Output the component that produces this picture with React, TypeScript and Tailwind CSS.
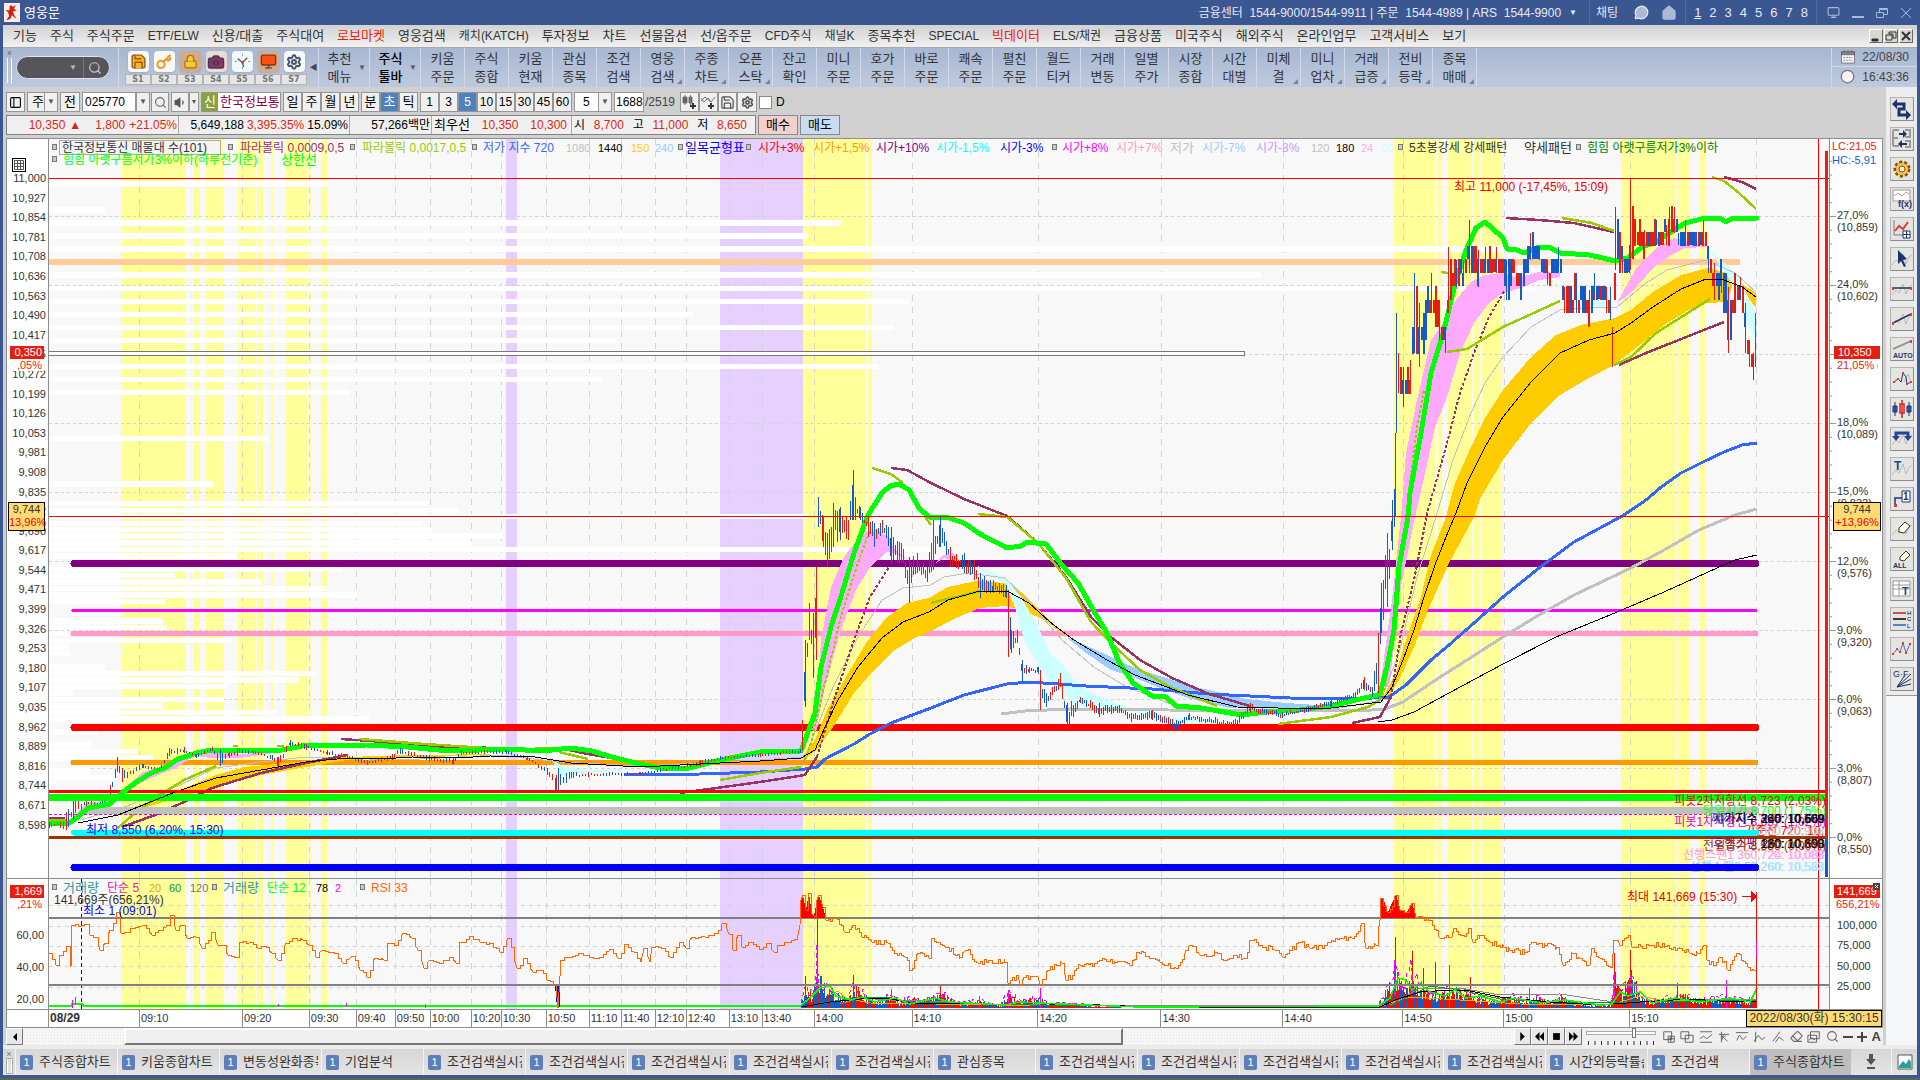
import React from 'react';
import {
  Camera, Clock, Download, Eraser, Home, Image, Key, Lock, MessageCircle, Monitor, PanelLeft, Save, Search, Settings, Volume1,
} from 'lucide-react';

const FONT = "font-['Liberation_Sans','Noto_Sans_CJK_KR',sans-serif]";

const menus = [
  '기능', '주식', '주식주문', 'ETF/ELW', '신용/대출', '주식대여', '로보마켓', '영웅검색', '캐치(KATCH)', '투자정보', '차트',
  '선물옵션', '선/옵주문', 'CFD주식', '채널K', '종목추천', 'SPECIAL', '빅데이터', 'ELS/채권', '금융상품', '미국주식',
  '해외주식', '온라인업무', '고객서비스', '보기',
];
const hotMenus = ['로보마켓', '빅데이터'];

const shortcuts = [
  ['키움', '주문'], ['주식', '종합'], ['키움', '현재'], ['관심', '종목'], ['조건', '검색'], ['영웅', '검색', '1'],
  ['주종', '차트', '1'], ['오픈', '스탁', '1'], ['잔고', '확인'], ['미니', '주문'], ['호가', '주문'], ['바로', '주문'],
  ['쾌속', '주문'], ['펼친', '주문'], ['월드', '티커'], ['거래', '변동'], ['일별', '주가'], ['시장', '종합'],
  ['시간', '대별'], ['미체', '결', '1'], ['미니', '업차', '1'], ['거래', '급증', '1'], ['전비', '등락', '1'], ['종목', '매매', '1'],
];

const tabs = [
  '주식종합차트', '키움종합차트', '변동성완화종목', '기업분석', '조건검색실시간', '조건검색실시간', '조건검색실시간',
  '조건검색실시간', '조건검색실시간', '관심종목', '조건검색실시간', '조건검색실시간', '조건검색실시간', '조건검색실시간',
  '조건검색실시간', '시간외등락률순', '조건검색', '주식종합차트',
];

const priceLabels = [
  '11,000', '10,927', '10,854', '10,781', '10,708', '10,636', '10,563', '10,490', '10,417', '10,345', '10,272', '10,199',
  '10,126', '10,053', '9,981', '9,908', '9,835', '9,762', '9,690', '9,617', '9,544', '9,471', '9,399', '9,326', '9,253',
  '9,180', '9,107', '9,035', '8,962', '8,889', '8,816', '8,744', '8,671', '8,598',
];

const rateLabels = [
  ['27,0%', '(10,859)'], ['24,0%', '(10,602)'], ['21,0%', '(10,346)'], ['18,0%', '(10,089)'], ['15,0%', '(9,832)'],
  ['12,0%', '(9,576)'], ['9,0%', '(9,320)'], ['6,0%', '(9,063)'], ['3,0%', '(8,807)'], ['0,0%', '(8,550)'],
];

const times: [string, number][] = [
  ['08/29', 49], ['09:10', 139], ['09:20', 242], ['09:30', 309], ['09:40', 356], ['09:50', 395], ['10:00', 430],
  ['10:20', 471], ['10:30', 501], ['10:50', 546], ['11:10', 589], ['11:40', 621], ['12:10', 655], ['12:40', 686],
  ['13:10', 729], ['13:40', 762], ['14:00', 814], ['14:10', 912], ['14:20', 1038], ['14:30', 1161], ['14:40', 1283],
  ['14:50', 1403], ['15:00', 1504], ['15:10', 1630], ['', 1883],
];

// x start, x end, colour of the strong / weak zones
const yellow = [
  [121, 186], [191, 192], [193, 197], [198, 200], [206, 217], [218, 219], [220, 224], [238, 256], [257, 259], [260, 263],
  [269, 270], [271, 273], [286, 307], [309, 311], [321, 327], [803, 866], [868, 872], [1394, 1435], [1438, 1442],
  [1448, 1472], [1474, 1480], [1482, 1499], [1500, 1501], [1503, 1504], [1621, 1676], [1677, 1679], [1680, 1689],
  [1691, 1692], [1700, 1705],
];
const violet = [[506, 517], [720, 803]];

// volume at price: y, height, x end
const profile = [
  [181, 6, 329], [207, 6, 105], [220, 6, 841], [233, 6, 808], [246, 6, 1586], [272, 6, 1261], [286, 5, 1535], [299, 5, 909],
  [312, 5, 693], [325, 5, 894], [338, 5, 616], [364, 5, 879], [377, 5, 603], [390, 5, 350], [436, 5, 269], [481, 6, 213],
  [501, 5, 429], [508, 5, 458], [514, 5, 808], [521, 5, 422], [527, 5, 432], [533, 6, 503], [540, 6, 471], [547, 5, 930],
  [553, 6, 235], [567, 5, 342], [573, 5, 175], [579, 6, 262], [586, 5, 327], [592, 6, 357], [599, 5, 165], [618, 6, 163],
  [625, 5, 167], [631, 5, 98], [638, 5, 231], [644, 6, 69], [651, 5, 71], [664, 6, 105], [671, 5, 316], [677, 6, 299],
  [684, 5, 228], [690, 6, 73], [697, 5, 224], [703, 6, 163], [710, 5, 277], [716, 6, 369], [729, 6, 97], [742, 6, 91],
  [749, 5, 138], [755, 6, 153], [768, 6, 90], [775, 5, 115], [781, 5, 57],
];

const green = '49,823 69,823 78,817 88,808 110,804 122,793 135,783 151,773 167,767 176,760 196,753 212,750 233,751 282,750 302,746 367,745 408,747 449,751 478,750 506,749 543,751 571,748 592,751 612,757 640,764 660,768 685,769 720,760 760,752 801,751 815,713 821,667 831,627 842,593 854,553 868,515 882,493 890,486 899,484 909,490 919,508 929,517 946,517 964,523 980,534 1007,548 1021,546 1027,542 1046,544 1062,565 1078,583 1095,613 1107,633 1119,662 1133,683 1152,696 1166,697 1176,706 1201,708 1242,715 1266,712 1299,710 1331,706 1360,699 1378,695 1381,690 1387,667 1394,630 1399,567 1408,517 1410,493 1421,433 1431,373 1444,330 1456,280 1467,248 1476,228 1485,222 1492,228 1503,238 1507,249 1517,250 1524,253 1539,247 1549,247 1560,253 1589,255 1603,258 1614,261 1628,258 1642,247 1656,242 1674,230 1685,223 1705,218 1722,219 1726,222 1731,219 1757,218';
const black = '78,823 98,819 118,815 143,805 175,792 216,778 261,770 306,762 347,758 380,759 412,757 457,758 490,756 535,757 571,763 640,767 700,764 760,761 801,758 815,750 825,727 838,700 858,667 882,638 903,622 929,612 948,600 980,591 1007,591 1029,603 1050,622 1074,640 1107,660 1135,675 1188,695 1237,707 1278,708 1331,708 1372,703 1381,702 1392,687 1403,660 1414,630 1424,597 1435,565 1446,537 1456,513 1467,483 1485,447 1503,417 1531,382 1560,353 1589,340 1615,333 1631,323 1653,307 1681,289 1706,279 1724,280 1742,287 1756,297';
const blue = '624,775 700,774 760,772 805,769 817,767 825,759 854,744 870,734 891,723 931,708 964,695 1007,684 1029,682 1086,686 1152,689 1209,694 1290,698 1352,699 1372,698 1389,697 1406,685 1431,660 1449,645 1474,623 1503,597 1539,568 1574,542 1624,515 1646,500 1660,488 1681,473 1703,462 1724,452 1742,445 1757,443';
const silver = '1001,714 1025,711 1070,709 1168,710 1290,711 1372,710 1385,709 1403,702 1431,683 1467,660 1503,637 1539,615 1574,595 1631,568 1664,550 1699,530 1735,515 1757,509';
const longBlack = '1378,722 1392,720 1414,712 1449,693 1503,664 1556,637 1610,615 1664,592 1717,568 1735,560 1757,555';
const thinGray = '80,820 122,808 180,785 216,768 261,762 306,757 400,760 500,755 560,762 640,766 760,760 805,757 833,687 858,637 882,600 903,588 931,585 944,577 968,573 1005,578 1025,597 1062,640 1095,668 1127,687 1168,703 1240,711 1340,708 1381,700 1399,653 1417,577 1435,520 1453,460 1471,413 1485,383 1503,357 1531,327 1560,310 1589,308 1617,307 1646,283 1667,270 1706,260 1735,273 1756,292';
const maroon = [
  '49,818 65,818', '122,827 155,815 184,802 212,788 261,773 306,763 347,755', '341,739 371,741 445,747 486,747',
  '559,748 588,754 612,758', '680,793 760,782 805,775 817,757',
  '891,468 907,470 931,483 964,499 1007,516 1038,543 1066,577 1091,617 1111,637 1140,660 1172,678 1209,694 1250,706',
  '1352,723 1380,717 1391,697', '1506,218 1539,220 1574,223 1596,228 1614,232', '1619,365 1646,353 1724,322',
  '1724,177 1742,182 1756,189',
];
const maroonDots = ['817,757 833,703 854,640 870,597 889,567', '1391,697 1401,633 1414,580 1428,510 1446,447 1460,393 1474,353 1489,317 1505,290'];
const olive = [
  '49,820 66,820', '118,828 135,813 163,793 184,780 216,766', '359,739 424,744 486,748', '535,748 557,748', '559,752 588,759',
  '720,780 760,773 801,767', '872,468 891,474 903,483', '925,517 931,525', '931,603 964,595 980,591',
  '978,514 1007,517 1038,543 1066,578 1091,622 1111,643 1140,670 1172,688 1217,706', '1278,724 1331,717 1368,707 1380,700',
  '1447,352 1467,349 1503,327 1560,301', '1562,218 1592,223 1614,231', '1614,365 1631,357 1656,333 1710,299',
  '1712,177 1724,181 1739,193 1756,209', '1441,272 1448,273', '277,746 284,746', '233,746 238,746',
];
const oliveDots = ['805,760 811,743 825,683 842,613 858,563 870,530', '1380,700 1385,687 1396,610 1408,500 1417,427 1424,390'];

const clouds: [string, string][] = [
  ['#ffcc00', '122,812 180,790 216,775 245,767 286,763 347,757 412,755 500,754 412,758 347,760 306,767 261,775 212,788 171,800 122,814'],
  ['#ffcc00', '803,756 815,740 827,710 846,677 866,643 886,618 907,603 929,598 948,587 976,581 1007,583 1021,592 1046,617 1066,637 1046,621 1025,611 1005,606 980,608 956,618 929,632 915,638 895,650 874,670 854,693 833,727 817,750 803,760'],
  ['#99ccff', '1066,637 1074,640 1107,655 1135,668 1188,685 1246,699 1286,703 1331,706 1286,708 1229,708 1188,698 1160,688 1135,678 1111,670 1086,653'],
  ['#ffcc00', '1381,700 1396,673 1406,640 1421,597 1431,555 1446,517 1455,483 1471,447 1485,418 1503,390 1531,357 1556,335 1581,325 1615,318 1631,310 1653,292 1681,275 1708,268 1724,272 1739,282 1756,293 1756,308 1742,290 1733,284 1727,302 1706,303 1689,310 1667,323 1646,340 1614,365 1589,378 1560,395 1531,423 1503,460 1481,497 1474,517 1449,563 1428,610 1414,647 1399,680 1387,700'],
  ['#ffaaff', '72,818 86,803 110,800 122,790 143,772 165,765 184,755 196,755 176,768 151,778 127,790 110,808 90,810'],
  ['#ffaaff', '196,756 214,751 240,754 280,752 240,758 212,758'],
  ['#ffaaff', '812,730 817,707 821,640 831,587 844,557 862,533 878,530 889,537 895,550 909,560 895,553 887,552 870,567 856,590 842,627 825,687 816,730'],
  ['#ffaaff', '933,565 944,555 952,553 962,562 944,558'],
  ['#ffaaff', '1380,687 1392,600 1401,517 1406,453 1417,400 1431,340 1444,322 1456,300 1471,282 1485,275 1503,273 1517,278 1539,272 1560,273 1560,277 1539,280 1524,287 1503,293 1489,303 1474,323 1460,353 1447,397 1435,427 1428,460 1415,517 1401,587 1389,687'],
  ['#ffaaff', '1617,303 1635,270 1656,248 1674,238 1692,242 1706,243 1706,247 1685,248 1671,255 1653,268 1631,293'],
  ['#ccffff', '550,758 562,766 585,770 640,769 585,773 562,776'],
  ['#ccffff', '976,565 1005,578 1021,597 1038,627 1050,653 1064,667 1078,685 1103,698 1127,707 1148,712 1172,718 1240,722 1172,722 1127,710 1099,707 1074,705 1064,692 1054,688 1042,670 1025,643 1015,607 1005,583 984,573'],
  ['#ccffff', '1560,278 1575,295 1606,302 1612,312 1606,309 1575,300'],
  ['#ccffff', '1708,248 1724,263 1739,277 1746,293 1755,313 1755,340 1747,320 1740,303 1728,277'],
];

const levels: [number, number, string, number, number][] = [
  [563, 7, '#800080', 74, 1756], [610, 3, '#ff00ff', 73, 1756], [633, 5, '#ff99cc', 73, 1756], [727, 7, '#ff0000', 74, 1756],
  [762, 5, '#ff9900', 73, 1756], [791, 3, '#ff0000', 49, 1826], [797, 7, '#00ff00', 49, 1826], [810, 7, '#c0c0c0', 88, 1756],
  [832, 6, '#00ffff', 74, 1756], [837, 3, '#993300', 49, 1826], [867, 7, '#0000ff', 74, 1756],
];

// x, high, low
const bars = [
  [49, 822, 828], [66, 812, 830], [73, 800, 820], [86, 798, 806], [102, 800, 810], [110, 785, 798], [117, 757, 772],
  [122, 768, 782], [143, 764, 768], [159, 768, 771], [169, 748, 756], [184, 747, 753], [196, 754, 758], [212, 747, 751],
  [220, 750, 766], [229, 752, 758], [237, 748, 756], [253, 750, 754], [272, 755, 760], [278, 757, 768], [290, 740, 746],
  [306, 744, 750], [327, 750, 755], [347, 754, 758], [367, 760, 765], [392, 754, 760], [400, 748, 754], [429, 755, 762],
  [453, 758, 764], [461, 750, 755], [506, 750, 754], [527, 756, 760], [547, 768, 775], [556, 775, 793], [558, 768, 790],
  [571, 772, 778], [640, 772, 775], [700, 760, 766], [720, 756, 760], [760, 753, 757], [800, 749, 753], [802, 720, 750],
  [805, 640, 707], [809, 603, 640], [813, 613, 678], [816, 567, 660], [818, 497, 527], [823, 517, 547], [827, 533, 567],
  [833, 503, 547], [840, 507, 540], [848, 520, 540], [853, 470, 520], [855, 497, 520], [860, 507, 520], [868, 517, 537],
  [874, 523, 547], [882, 520, 533], [891, 527, 563], [901, 543, 563], [909, 557, 603], [917, 553, 573], [927, 567, 582],
  [933, 520, 570], [940, 517, 547], [950, 547, 567], [964, 553, 573], [974, 560, 580], [980, 573, 598], [993, 580, 593],
  [1006, 585, 598], [1008, 590, 657], [1011, 630, 653], [1017, 630, 643], [1022, 660, 682], [1029, 667, 673], [1038, 667, 674],
  [1040, 670, 710], [1046, 693, 707], [1060, 673, 687], [1067, 703, 730], [1080, 697, 703], [1099, 703, 717], [1119, 705, 713],
  [1131, 713, 722], [1152, 710, 720], [1176, 720, 730], [1189, 713, 720], [1233, 720, 730], [1250, 703, 713], [1282, 712, 718],
  [1331, 700, 707], [1355, 692, 697], [1364, 677, 690], [1372, 687, 697], [1378, 633, 693], [1381, 583, 633], [1387, 533, 607],
  [1392, 500, 550], [1395, 433, 517], [1396, 313, 433], [1398, 353, 393], [1403, 367, 407], [1410, 360, 393], [1414, 273, 353],
  [1419, 303, 367], [1431, 273, 313], [1439, 300, 340], [1445, 327, 353], [1448, 247, 313], [1456, 260, 287], [1463, 260, 275],
  [1469, 220, 273], [1478, 250, 287], [1485, 247, 273], [1496, 247, 273], [1506, 260, 300], [1514, 260, 273], [1521, 273, 297],
  [1530, 233, 260], [1539, 247, 260], [1547, 260, 285], [1558, 247, 273], [1564, 287, 313], [1576, 273, 313], [1589, 290, 327],
  [1594, 273, 293], [1606, 287, 313], [1610, 287, 320], [1612, 327, 367], [1615, 207, 270], [1622, 247, 273], [1629, 245, 273],
  [1630, 178, 270], [1635, 220, 243], [1644, 230, 257], [1656, 220, 245], [1666, 225, 245], [1669, 207, 243], [1674, 207, 233],
  [1678, 233, 245], [1685, 220, 243], [1696, 233, 245], [1703, 220, 243], [1708, 247, 273], [1714, 263, 300], [1721, 260, 293],
  [1728, 287, 353], [1735, 273, 313], [1740, 277, 300], [1745, 303, 353], [1749, 340, 367], [1753, 353, 380], [1755, 313, 367],
];

const rsiKeys = '49,953 56,965 60,955 67,946 71,967 72,925 86,924 90,935 95,937 100,950 105,943 110,930 117,912 121,933 132,928 143,925 152,935 160,930 167,925 171,915 176,930 182,925 187,938 196,937 202,948 212,932 218,945 223,945 228,955 236,957 240,942 250,942 258,948 263,946 272,953 278,960 286,943 294,938 303,940 309,945 316,957 322,950 335,953 343,963 352,956 360,970 367,977 375,958 384,960 388,943 395,945 403,933 412,938 418,950 424,968 430,960 440,963 450,957 456,963 460,942 470,936 480,942 490,943 500,952 508,938 517,968 524,958 533,972 540,970 547,980 556,986 558,1008 561,960 566,957 580,953 590,957 600,957 610,949 618,958 625,944 634,952 641,962 644,948 650,962 652,947 662,948 670,957 680,942 686,948 692,937 705,937 715,933 723,923 729,934 733,950 738,935 742,947 750,942 760,949 768,943 774,952 778,945 785,942 797,940 800,925 801,900 803,895 806,910 809,893 812,914 814,916 817,900 819,895 823,907 826,920 835,917 845,932 853,925 862,937 872,942 888,943 895,953 905,957 910,970 918,953 929,958 932,938 945,947 960,957 966,950 978,963 990,960 1005,962 1008,983 1018,975 1020,985 1024,977 1038,977 1040,985 1048,970 1062,963 1066,980 1080,965 1095,963 1100,960 1115,962 1130,965 1137,952 1160,962 1176,968 1186,950 1190,945 1200,955 1215,952 1225,960 1235,955 1245,958 1250,940 1260,945 1275,950 1283,957 1290,950 1300,942 1310,948 1325,945 1340,938 1352,938 1362,923 1366,948 1376,945 1380,920 1381,898 1384,906 1388,912 1396,895 1400,910 1407,912 1412,903 1416,918 1430,920 1440,938 1452,937 1454,928 1462,935 1469,928 1473,942 1480,935 1490,942 1504,947 1510,950 1525,952 1532,942 1545,945 1557,947 1563,965 1572,953 1580,958 1590,965 1592,948 1600,958 1612,968 1614,940 1620,945 1630,935 1632,947 1650,945 1665,946 1680,948 1690,953 1698,953 1704,945 1707,960 1714,965 1720,957 1728,970 1737,953 1748,967 1754,970 1757,958';

// x, bar height
const volumes = [
  [801, 4], [806, 24], [812, 14], [817, 44], [822, 28], [832, 18], [848, 10], [854, 26], [862, 16], [875, 6], [890, 14],
  [900, 6], [908, 10], [930, 10], [940, 16], [960, 5], [980, 8], [1000, 2], [1008, 15], [1020, 8], [1040, 10], [1052, 4],
  [1066, 6], [1090, 2], [1120, 1], [1378, 2], [1385, 18], [1395, 46], [1403, 22], [1412, 44], [1420, 22], [1430, 18],
  [1440, 12], [1449, 22], [1470, 14], [1490, 8], [1510, 12], [1530, 8], [1535, 12], [1550, 6], [1562, 12], [1575, 4],
  [1610, 3], [1615, 34], [1622, 16], [1631, 38], [1640, 14], [1650, 6], [1665, 10], [1680, 14], [1700, 8], [1726, 12],
  [1745, 7], [1757, 12],
];
const spikes = [
  [805, 976, '#ff0000'], [817, 919, '#e61400'], [853, 975, '#e61400'], [891, 989, '#ff00ff'], [940, 986, '#e61400'],
  [979, 996, '#ff00ff'], [1008, 990, '#ff00ff'], [1040, 988, '#ff00ff'], [1395, 937, '#e61400'], [1412, 951, '#e61400'],
  [1423, 968, '#e61400'], [1435, 962, '#e61400'], [1449, 965, '#ff00ff'], [1470, 977, '#e61400'], [1529, 988, '#ff00ff'],
  [1614, 953, '#e61400'], [1630, 950, '#e61400'], [1677, 983, '#e61400'], [1726, 980, '#ff00ff'],
] as [number, number, string][];

function makeRandom(seed: number) {
  let s = seed;
  return () => {
    s = (s * 1103515245 + 12345) % 2147483648;
    return s / 2147483648;
  };
}

function lerpKeys(keys: number[][], x: number, col: number) {
  for (let i = 1; i < keys.length; i++) {
    if (x <= keys[i][0]) {
      const a = keys[i - 1];
      const b = keys[i];
      return a[col] + ((b[col] - a[col]) * (x - a[0])) / (b[0] - a[0] || 1);
    }
  }
  return keys[keys.length - 1][col];
}

// above 10,000 the price moves in 50 won ticks
const snap = (y: number) => Math.round(219 + Math.round((y - 219) / 13.45) * 13.45);

function buildCandles() {
  const rnd = makeRandom(7);
  let up = '';
  let down = '';
  let rising = true;
  bars.forEach(([x, hi, lo], i) => {
    if (i % 2) up += `M${x + 0.5} ${hi}V${lo}`;
    else down += `M${x + 0.5} ${hi}V${lo}`;
    const next = bars[i + 1];
    if (!next) return;
    const quiet = x < 800;
    for (let px = x + 2; px < next[0]; px += quiet ? 3 : 2) {
      const h = lerpKeys(bars, px, 1);
      const l = lerpKeys(bars, px, 2);
      const size = l - h;
      let top = Math.round(h + rnd() * size * 0.5);
      let bottom = Math.max(top + 2, Math.round(l - rnd() * size * 0.4));
      let d = `M${px + 0.5} ${top}V${bottom}`;
      if (px > 1396) {
        top = snap(top);
        bottom = Math.max(top + 13, snap(bottom));
        d = `M${px + 0.5} ${top}V${bottom}M${px + 1.5} ${top}V${bottom}`;
      }
      if (rnd() > 0.6) rising = !rising;
      if (rising) up += d;
      else down += d;
    }
  });
  return { up, down };
}

function buildRsi() {
  const rnd = makeRandom(21);
  const keys = rsiKeys.split(' ').map((p) => p.split(',').map(Number));
  let d = `M${keys[0][0]} ${keys[0][1]}`;
  keys.forEach(([x, y], i) => {
    const next = keys[i + 1];
    if (!next) return;
    d += `L${x} ${y}`;
    const step = x < 800 ? 3 : 2;
    for (let px = x + step; px < next[0]; px += step) {
      const py = Math.round(lerpKeys(keys, px, 1) + (rnd() - 0.5) * (x < 800 ? 3 : 6));
      d += `H${px}V${py}`;
    }
    d += `L${next[0]} ${next[1]}`;
  });
  return d;
}

function buildVolume() {
  const rnd = makeRandom(3);
  let up = '';
  let down = '';
  let pink = '';
  for (let x = 801; x < 1757; x += 1) {
    if (x > 1120 && x < 1378) continue;
    const h = lerpKeys(volumes, x, 1);
    const v = Math.max(1, Math.round(h * (0.35 + rnd() * 0.75)));
    const d = `M${x + 0.5} 1008v-${v}`;
    if (rnd() > 0.45) up += d;
    else down += d;
    if (x % 2) pink += `${pink ? 'L' : 'M'}${x} ${1007 - Math.round(h * (0.5 + rnd() * 0.7))}`;
    if (x === 1119) pink += 'M1378 1006';
  }
  return { up, down, pink: pink.replace('M1378 1006L', 'M') };
}

const candles = buildCandles();
const rsi = buildRsi();
const volume = buildVolume();

function Zones({ top, bottom }: { top: number; bottom: number }) {
  return (
    <>
      {violet.map(([a, b]) => <rect key={a} x={a} y={top} width={b - a} height={bottom - top} fill="#e6d0ff" />)}
      {yellow.map(([a, b]) => <rect key={a} x={a} y={top} width={b - a} height={bottom - top} fill="#ffff99" />)}
    </>
  );
}

function TimeGrid({ top, bottom }: { top: number; bottom: number }) {
  return (
    <g stroke="#d2d2d2" strokeDasharray="6 6">
      {times.slice(1, -1).map(([t, x]) => <line key={t} x1={x + 0.5} x2={x + 0.5} y1={top} y2={bottom} />)}
      <line x1="1756.5" x2="1756.5" y1={top} y2={bottom} />
    </g>
  );
}

const legend: [number, string, string][] = [
  [62, '한국정보통신 매물대 수(101)', '#333'], [240, '파라볼릭 0,0009,0,5', '#993366'], [362, '파라볼릭 0,0017,0,5', '#99cc00'],
  [483, '저가 지수 720', '#3366ff'], [566, '1080', '#c0c0c0'], [598, '1440', '#000'], [631, '150', '#ffcc00'],
  [655, '240', '#99ccff'], [685, '일목균형표', '#0000ff'], [758, '시가+3%', '#ff0000'], [813, '시가+1,5%', '#ff9900'],
  [876, '시가+10%', '#800080'], [936, '시가-1,5%', '#00ffff'], [1000, '시가-3%', '#0000ff'], [1062, '시가+8%', '#ff00ff'],
  [1116, '시가+7%', '#ff99cc'], [1170, '저가', '#c0c0c0'], [1202, '시가-7%', '#99ccff'], [1256, '시가-8%', '#cc99ff'],
  [1311, '120', '#c0c0c0'], [1336, '180', '#000'], [1361, '24', '#ffaaff'], [1381, '60', '#ccffff'],
  [1409, '5초봉강세 강세패턴', '#333'], [1524, '약세패턴', '#333'], [1587, '힘힘 아랫구름저가3%이하', '#008000'],
];
const legendMarks = [52, 228, 350, 472, 678, 746, 1052, 1398, 1576];

const volumeLegend: [number, string, string][] = [
  [63, '거래량', '#339999'], [107, '단순 5', '#e619b4'], [149, '20', '#e6aa00'], [169, '60', '#009933'], [190, '120', '#777'],
  [223, '거래량', '#339999'], [267, '단순 12', '#00ff00'], [316, '78', '#000'], [335, '2', '#ff00ff'], [350, '3', '#ccffff'],
  [371, 'RSI 33', '#ff6600'],
];

// bare numbers are set a size smaller, names without digits a size larger
function legendSize(label: string) {
  if (/^\d+$/.test(label)) return 'text-[11px]';
  return /\d/.test(label) ? 'text-[12px]' : 'text-[13px]';
}

function Mark({ x, y }: { x: number; y: number }) {
  return <rect x={x + 0.5} y={y + 0.5} width="4" height="5" fill="#c8c8c8" stroke="#777" />;
}

function PriceChart() {
  return (
    <svg viewBox="49 139 1780 739" preserveAspectRatio="none" className={`block h-full w-full text-[12px] ${FONT}`} shapeRendering="crispEdges">
      <rect x="49" y="139" width="1780" height="739" fill="#f8f8f8" />
      <Zones top={139} bottom={878} />
      <TimeGrid top={139} bottom={878} />
      <g stroke="#d2d2d2" strokeDasharray="3 3">
        {rateLabels.map(([r], i) => <line key={r} x1="49" x2="1826" y1={216.5 + i * 69} y2={216.5 + i * 69} />)}
      </g>
      {profile.map(([y, h, end]) => <rect key={y} x="49" y={y} width={end - 49} height={h} fill="#fff" />)}
      <rect x="49" y="259" width="1691" height="6" fill="#ffcc99" />
      <rect x="40" y="351.5" width="1204.5" height="4" fill="#fff" stroke="#777" />
      {levels.slice(0, 5).map(([y, w, c, a, b]) => (
        <line key={y} x1={a} x2={b} y1={y + 0.5} y2={y + 0.5} stroke={c} strokeWidth={w} strokeLinecap={a > 49 ? 'round' : 'butt'} />
      ))}
      {clouds.map(([c, p]) => <polygon key={p} points={p} fill={c} />)}
      <g fill="none">
        <polyline points={thinGray} stroke="#c0c0c0" />
        <polyline points={silver} stroke="#c0c0c0" strokeWidth="3" />
        <polyline points={blue} stroke="#3366ff" strokeWidth="3" />
        {maroon.map((p) => <polyline key={p} points={p} stroke="#993366" strokeWidth="2.5" />)}
        {maroonDots.map((p) => <polyline key={p} points={p} stroke="#993366" strokeWidth="2" strokeDasharray="3 2" />)}
        {olive.map((p) => <polyline key={p} points={p} stroke="#99cc00" strokeWidth="2.5" />)}
        {oliveDots.map((p) => <polyline key={p} points={p} stroke="#99cc00" strokeWidth="2" strokeDasharray="3 2" />)}
        <polyline points={green} stroke="#00ff00" strokeWidth="5" strokeLinejoin="round" strokeLinecap="round" />
        <path d={candles.up} stroke="#e61e0f" />
        <path d={candles.down} stroke="#145ac8" />
        <polyline points={black} stroke="#000" />
        <polyline points={longBlack} stroke="#000" />
      </g>
      {levels.slice(5).map(([y, w, c, a, b]) => (
        <line key={y} x1={a} x2={b} y1={y + 0.5} y2={y + 0.5} stroke={c} strokeWidth={w} strokeLinecap={a > 49 ? 'round' : 'butt'} />
      ))}
      <line x1="49" x2="1826" y1="814.5" y2="814.5" stroke="#ff00cc" strokeDasharray="3 2" />
      <polyline points="78,817 88,808 110,804 122,793 135,783" fill="none" stroke="#00ff00" strokeWidth="5" />
      <polyline points="78,823 98,819 118,815 143,805 175,792" fill="none" stroke="#000" />
      <line x1="49" x2="1829" y1="178.5" y2="178.5" stroke="#f00" />
      <line x1="49" x2="1829" y1="516.5" y2="516.5" stroke="#f00" />
      <line x1="1818.5" x2="1818.5" y1="139" y2="878" stroke="#f00" />
      <rect x="1825" y="151" width="3" height="687" fill="#e61e0f" />
      <rect x="1825" y="838" width="3" height="39" fill="#145ac8" />

      {/* level captions on the right edge */}
      <g textAnchor="end">
        <text x="1826" y="805" fill="#e60000">피봇2차저항선 8,723 (2,03%)</text>
        <text x="1826" y="815" fill="#00ff00">당일시가 8,700 (1,75%)</text>
        <text x="1826" y="826" fill="#e600b4">피봇1차저항선 8,637 (1,02%)</text>
        <text x="1824" y="823" fill="#3366ff">저가 지수 720: 10,101</text>
        <text x="1824" y="823" fill="#000">시가지수 360: 10,609</text>
        <text x="1825" y="823" fill="#000">240: 10,669</text>
        <text x="1824" y="835" fill="#f00">기준선 720: 10,</text>
        <text x="1824" y="835" fill="#c0c0c0">1080: 10,908</text>
        <text x="1824" y="848" fill="#800080">후행스팬 120: 10,350</text>
        <text x="1824" y="848" fill="#000">180: 10,608</text>
        <text x="1825" y="848" fill="#000">260: 10,698</text>
        <text x="1826" y="850" fill="#993300">전일종가 8,550 (0,00%)</text>
        <text x="1824" y="859" fill="#ff99cc">선행스팬1 360,720: 10,083</text>
        <text x="1825" y="859" fill="#ffaaff">24: 10,088</text>
        <text x="1824" y="871" fill="#99ccff">선행스팬2 52,260: 10,583</text>
        <text x="1825" y="871" fill="#aaf5ff">60: 10,544</text>
      </g>
      <line x1="1660" x2="1756" y1="867.5" y2="867.5" stroke="#00f" strokeWidth="7" strokeLinecap="round" />
      <line x1="1690" x2="1756" y1="832.5" y2="832.5" stroke="#0ff" strokeWidth="6" strokeLinecap="round" />
      <text x="1454" y="191" fill="#e60000">최고 11,000 (-17,45%, 15:09)</text>
      <text x="86" y="834" fill="#0000ff">최저 8,550 (6,20%, 15:30)</text>

      <rect x="59.5" y="140.5" width="161" height="14" fill="#f4f4f4" stroke="#aaa" />
      {legendMarks.map((x) => <Mark key={x} x={x} y={144} />)}
      <Mark x={52} y={156} />
      {legend.map(([x, label, c]) => <text key={x} x={x} y="152" fill={c} className={legendSize(label)}>{label}</text>)}
      <text x="63" y="164" fill="#00ff00">힘힘 아랫구름저가3%이하(하루전기준)</text>
      <text x="281" y="164" fill="#00ff00" className="text-[13px]">상한선</text>
    </svg>
  );
}

function VolumeChart() {
  return (
    <svg viewBox="49 879 1780 130" preserveAspectRatio="none" className={`block h-full w-full text-[12px] ${FONT}`} shapeRendering="crispEdges">
      <rect x="49" y="879" width="1780" height="130" fill="#f8f8f8" />
      <Zones top={879} bottom={1009} />
      <TimeGrid top={879} bottom={1009} />
      <g stroke="#d2d2d2" strokeDasharray="4 4">
        {[905, 926, 946, 966, 987].map((y) => <line key={y} x1="49" x2="1829" y1={y + 0.5} y2={y + 0.5} />)}
      </g>
      <line x1="81.5" x2="81.5" y1="879" y2="1009" stroke="#00f" strokeDasharray="4 3" />
      <path d={volume.up} stroke="#e61400" />
      <path d={volume.down} stroke="#145ac8" />
      <path d={volume.pink} fill="none" stroke="#ff00ff" strokeDasharray="4 3" />
      {spikes.map(([x, y, c]) => <line key={x} x1={x + 0.5} x2={x + 0.5} y1={y} y2="1008" stroke={c} />)}
      <path d="M817 945v45M1395 960v35M1412 975v25M1631 975v25M1614 975v25" stroke="#ff00ff" strokeWidth="2" strokeDasharray="5 3" />
      <g fill="none">
        <polyline points="830,995 838,991 846,998 870,1003 1000,1005 1380,1006 1410,997 1460,1000 1520,1004 1610,1005 1640,996 1660,1000 1757,1000" stroke="#e6aa00" />
        <polyline points="840,1004 860,998 890,1000 930,1001 980,1004 1100,1006 1390,1005 1420,988 1460,988 1500,995 1560,994 1620,1003 1690,999 1757,1000" stroke="#888" />
        <polyline points="820,1003 850,999 875,997 890,998 910,1002 980,1004 1080,1006 1390,1006 1430,986 1460,990 1500,999 1560,1003 1757,1000" stroke="#009933" />
        <polyline points="801,1007 830,1002 860,999 875,998 892,999 910,1003 960,1004 1050,1004 1100,1005 1150,1007 1380,1007 1395,1000 1420,992 1450,990 1470,991 1500,997 1550,1002 1600,1005 1640,1002 1690,999 1720,1001 1757,1001" stroke="#000" strokeWidth="1" />
        <polyline points="49,1006 71,1006 72,1004 82,1004 84,1006 800,1006 812,996 820,988 830,986 836,996 850,1000 862,997 875,1002 895,998 910,1004 935,998 950,1002 1005,1005 1020,1002 1060,1004 1140,1007 1378,1006 1390,998 1398,978 1406,980 1412,990 1420,984 1430,992 1445,996 1455,990 1466,998 1480,996 1500,1002 1515,998 1540,1003 1565,1000 1600,1005 1612,1004 1620,992 1628,996 1640,992 1652,1003 1675,998 1700,1002 1730,998 1750,1002 1757,988" stroke="#00ff00" strokeWidth="1.500" />
      </g>
      <path d="M72 1000v8M75 997v8M346 1003v4M278 1004v3M425 1004v4" stroke="#ff00ff" />
      <g stroke="#808080" strokeWidth="2">
        <line x1="49" x2="1829" y1="918" y2="918" />
        <line x1="49" x2="1829" y1="985" y2="985" />
      </g>
      <path d="M801 918V900L803 895L806 910L809 893L812 914L814 916L817 900L819 895L823 907L826 918ZM1380 918L1381 898L1384 900L1388 912L1396 894L1400 910L1407 912L1412 902L1416 918Z" fill="#f00" />
      <path d="M555 986H560V1007H557Z" fill="#00f" />
      <path d={rsi} fill="none" stroke="#ff6600" />
      <line x1="1756.5" x2="1756.5" y1="892" y2="1008" stroke="#e61400" />
      <line x1="1756.5" x2="1756.5" y1="942" y2="958" stroke="#ff00ff" />
      <line x1="1818.5" x2="1818.5" y1="879" y2="1009" stroke="#f00" />
      <path d="M1742 896.5H1752" stroke="#f00" />
      <path d="M1751 891L1757 896.5L1751 902Z" fill="#f00" />
      {volumeLegend.map(([x, label, c]) => <text key={x} x={x} y="892" fill={c} className={legendSize(label)}>{label}</text>)}
      {[52, 212, 360].map((x) => <Mark key={x} x={x} y={884} />)}
      <text x="54" y="904" fill="#333">141,669주(656,21%)</text>
      <text x="83" y="915" fill="#00f">최소 1 (09:01)</text>
      <text x="1627" y="901" fill="#e60000">최대 141,669 (15:30)</text>
    </svg>
  );
}

function Chart() {
  const timeColumns = times.slice(0, -1).map(([, x], i) => `minmax(0,${times[i + 1][1] - x}fr)`).join(' ');
  return (
    <section className="grid min-h-0 flex-1 grid-cols-[42px_minmax(0,1fr)_53px] grid-rows-[minmax(0,1fr)_131px_18px] border border-[#8c8c8c] bg-white text-[11px] text-[#333]">
      <div className="relative flex flex-col justify-between border-r border-[#8c8c8c] pt-8 pr-0.5 pb-[46px] text-right leading-[14px]">
        {priceLabels.map((p) => <span key={p}>{p}</span>)}
        <button aria-label="데이터 표" className="absolute top-[19px] left-[5px] h-3.5 w-3.5 border border-black bg-white p-px">
          <svg viewBox="0 0 10 10" className="h-full w-full" fill="none" stroke="#555"><path d="M.5 .5h9v9h-9zM.5 3.5h9M.5 6.5h9M3.5 .5v9M6.5 .5v9" /></svg>
        </button>
        <span className="absolute top-[207px] left-[3px] h-[13px] w-[34px] bg-[#e61e0f] pr-0.5 leading-[13px] text-white">0,350</span>
        <span className="absolute top-[220px] left-[3px] w-[34px] bg-white pr-0.5 leading-3 text-[#e61e0f]">,05%</span>
        <span className="absolute top-[363px] left-px h-[29px] w-[37px] border border-black bg-[#ffdc73] text-center leading-[13px]">
          9,744<br /><span className="text-red-600">13,96%</span>
        </span>
      </div>
      <PriceChart />
      <div className="relative flex flex-col justify-between border-l border-[#8c8c8c] pt-[70px] pb-[23px] pl-[7px] leading-3">
        {rateLabels.map(([r, p]) => <span key={r} className="block">{r}<br />{p}</span>)}
        <svg viewBox="0 0 6 739" preserveAspectRatio="none" className="absolute top-0 left-0 h-full w-1.5" stroke="#999">
          {rateLabels.map(([r], i) => <path key={r} d={`M0 ${77.5 + i * 69}h6m-6 -13.8h2m-2 -13.8h2m-2 -13.8h2m-2 -13.8h2`} />)}
        </svg>
        <span className="absolute top-0 left-0.5 leading-[14px] whitespace-nowrap text-[#e61e0f]">LC:21,05<br /><span className="text-[#145ac8]">HC:-5,91</span></span>
        <span className="absolute top-[207px] left-1 h-[13px] w-[46px] bg-[#e61e0f] pl-1 leading-[13px] text-white">10,350</span>
        <span className="absolute top-[220px] left-[7px] w-10 bg-white leading-3 text-[#e61e0f]">21,05%</span>
        <span className="absolute top-[363px] left-[3px] h-[29px] w-12 border border-black bg-[#ffdc73] text-center leading-[13px]">
          9,744<br /><span className="text-red-600">+13,96%</span>
        </span>
      </div>

      <div className="relative flex flex-col justify-between border-t border-r border-[#8c8c8c] pt-12 pr-1 pb-0.5 text-right leading-4">
        <span>60,00</span><span>40,00</span><span>20,00</span>
        <span className="absolute top-1.5 left-[3px] h-[13px] w-[34px] bg-[#e61e0f] pr-0.5 leading-[13px] text-white">1,669</span>
        <span className="absolute top-[19px] left-[3px] w-[34px] pr-0.5 leading-3 text-[#e61e0f]">,21%</span>
      </div>
      <div className="min-h-0 border-t border-[#8c8c8c]"><VolumeChart /></div>
      <div className="relative flex flex-col justify-between border-t border-l border-[#8c8c8c] pt-[38px] pb-[15px] pl-[7px] leading-4">
        <span>100,000</span><span>75,000</span><span>50,000</span><span>25,000</span>
        <span className="absolute top-1.5 left-1 h-[13px] w-[46px] bg-[#e61e0f] pl-[3px] leading-[13px] text-white">141,669</span>
        <span className="absolute top-[19px] left-1.5 leading-3 text-[#e61e0f]">656,21%</span>
        <button aria-label="닫기" className="absolute top-1 right-0.5 h-[7px] w-[7px] bg-[#444]">
          <svg viewBox="0 0 7 7" className="h-full w-full" stroke="#fff"><path d="M2 2l3 3M5 2l-3 3" /></svg>
        </button>
      </div>

      <div className="border-t border-r border-[#8c8c8c]" />
      <div className="relative col-span-2 grid border-t border-[#8c8c8c] leading-4" style={{ gridTemplateColumns: timeColumns }}>
        {times.slice(0, -1).map(([t]) => (
          <span key={t} className="border-l border-[#8c8c8c] pl-px first:border-l-0 first:text-[12px] first:font-bold">
            {t}
          </span>
        ))}
        <span className="absolute top-0 right-0 h-[17px] w-[136px] border border-black bg-[#ffdc73] text-center text-[12px] leading-[14px] whitespace-nowrap">
          2022/08/30(화) 15:30:15
        </span>
      </div>
    </section>
  );
}

function TitleBar() {
  return (
    <header className="flex h-[25px] shrink-0 items-center bg-[#3a5791] pl-1 text-[13px] text-[#e4eaf5]">
      <svg viewBox="0 0 16 20" className="h-[19px] w-4 bg-[#f3efe8]"><path d="M6 2l3 2 3-2-2 4 3 2-4 1 1 3 3 5-5-4-2 4-4 1 3-4-1-4-3-3 4 1z" fill="#d21e14" /></svg>
      <h1 className="ml-1 grow text-white">영웅문</h1>
      <span className="text-[12px] whitespace-pre">금융센터  1544-9000/1544-9911 | 주문  1544-4989 | ARS  1544-9900</span>
      <button aria-label="전화번호" className="mr-3 ml-2 text-[8px]">▼</button>
      <button className="flex h-full items-center border-l border-[#4f6aa3] pr-4 pl-1.5 text-[12px]">채팅</button>
      <MessageCircle size={15} className="mr-3 fill-[#a9b9d6]" />
      <Home size={16} className="mr-2 fill-[#a9b9d6] text-[#a9b9d6]" />
      <nav className="flex h-full items-center gap-2 border-l border-[#4f6aa3] px-2">
        {[1, 2, 3, 4, 5, 6, 7, 8].map((n) => <button key={n} className={n === 1 ? 'underline' : ''}>{n}</button>)}
      </nav>
      <div className="flex h-full items-center gap-3 border-l border-[#4f6aa3] pr-2 pl-2.5 text-[#a9b9d6]">
        <button aria-label="모니터"><Monitor size={13} /></button>
        <button aria-label="최소화"><svg viewBox="0 0 12 12" className="h-3 w-3"><path d="M0 9h12v2H0z" fill="currentColor" /></svg></button>
        <button aria-label="이전 크기로"><svg viewBox="0 0 12 12" className="h-3 w-3" fill="none" stroke="currentColor"><path d="M.5 5.5h7v5h-7zM3.5 5V1.500h8v6h-4M3.5 2.500h8" /></svg></button>
        <button aria-label="닫기"><svg viewBox="0 0 12 12" className="h-3 w-3" stroke="currentColor"><path d="M1 1l10 10M11 1L1 11" /></svg></button>
      </div>
    </header>
  );
}

function MenuBar() {
  return (
    <nav className="flex h-[23px] shrink-0 items-center gap-[13px] border-b border-[#aaa] bg-gradient-to-b from-[#d2d2d2] to-[#f0f0f0] pl-2.5 text-[13px] whitespace-nowrap text-[#333]">
      {menus.map((m) => (
        <a key={m} href="#" className={`${hotMenus.includes(m) ? 'text-[#e61e0f]' : ''} ${/[A-Z]/.test(m) ? 'text-[12px]' : ''}`}>{m}</a>
      ))}
      <span className="ml-auto flex gap-px pr-1">
        {['M2 9h6v2H2z', 'M1 5h6v5H1zM4 2h7v6H8V4H4z', 'M2 2l8 8M10 2L2 10'].map((d, i) => (
          <button key={d} aria-label="창" className="h-3.5 w-3.5 border border-white border-r-[#666] border-b-[#666] bg-[#d8d8d0]">
            <svg viewBox="0 0 12 12" className="h-full w-full" fill={i === 0 ? '#333' : 'none'} stroke="#333" strokeWidth={i === 2 ? 2 : 1}><path d={d} /></svg>
          </button>
        ))}
      </span>
    </nav>
  );
}

function ToolBar() {
  const quick = [
    { icon: <Save size={17} className="fill-[#ffb428] text-[#965a14]" />, bg: 'bg-[#f8f8f8]' },
    { icon: <Key size={16} strokeWidth={3} className="text-[#eb9b1e]" />, bg: 'bg-[#f8f8f8]' },
    { icon: <Lock size={15} className="fill-[#fac832] text-[#a0781e]" />, bg: 'bg-[#d2aa8c]' },
    { icon: <Camera size={18} className="fill-[#96325a] text-[#3c3c64]" />, bg: 'bg-[#ebdcd2]' },
    { icon: <svg viewBox="0 0 20 20" className="h-[19px] w-[19px]"><path d="M10 2v2M10 16v2M2 10h2M16 10h2" stroke="#888" /><path d="M5 7l5 4 5-5M10 11l1 5" fill="none" stroke="#5a6478" strokeWidth="1.500" /><circle cx="10" cy="11" r="1.500" fill="#dc3232" /></svg>, bg: 'bg-[#f0f8fa]' },
    { icon: <Monitor size={17} className="fill-[#ff5014] text-[#6e3c28]" />, bg: 'bg-[#d2aa8c]' },
    { icon: <Settings size={16} strokeWidth={3} className="text-[#46556e]" />, bg: 'bg-[#f8f8f8]' },
  ];
  return (
    <div className="flex h-[39px] shrink-0 bg-gradient-to-b from-[#a8b8d2] to-[#bec9dd] text-[13px] leading-[18px] text-[#333]">
      <div className="flex w-[13px] shrink-0 flex-col items-center text-[9px] leading-[10px] text-[#667]">
        ×<span className="h-[25px] w-[5px] border-x border-white" />
      </div>
      <label className="mt-2 mr-2 flex h-[23px] w-[94px] shrink-0 items-center rounded-full border border-[#dfe6f0] bg-[#55555a]">
        <input aria-label="메뉴 검색" className="w-[52px] bg-transparent pl-3 text-white outline-none" />
        <span className="w-3.5 text-[8px] text-[#bbb]">▼</span>
        <span className="flex h-full items-center border-l border-[#777] pl-1"><Search size={14} className="text-[#ccc]" /></span>
      </label>
      <div className="flex w-[191px] shrink-0 gap-0 border-l border-[#d0daea] pt-[3px] pl-[6px]">
        {quick.map((q, i) => (
          <button key={i} className="flex w-[26px] flex-col items-center">
            <span className={`flex h-[21px] w-[21px] items-center justify-center rounded-[4px] shadow ${q.bg}`}>{q.icon}</span>
            <span className="mt-0.5 h-[11px] w-full border border-[#b4b4b4] bg-[#e6e6e6] font-['DejaVu_Sans'] text-[8px] leading-[9px] font-bold text-[#777]">S{i + 1}</span>
          </button>
        ))}
      </div>
      <button aria-label="이전" className="w-[9px] shrink-0 text-[8px] text-[#445]">◀</button>
      {[['추천', '메뉴'], ['주식', '툴바']].map(([a, b], i) => (
        <button key={a} className={`flex w-[51px] shrink-0 items-center gap-1.5 border-l border-[#d0daea] pl-2 ${i ? 'font-medium text-black' : ''}`}>
          <span className="w-[25px]">{a}<br />{b}</span><span className="text-[8px] text-[#556]">▼</span>
        </button>
      ))}
      {shortcuts.map(([a, b, more], i) => (
        <button key={i} className="relative w-11 shrink-0 border-l border-[#d0daea]">
          {a}<br />{b}
          {more && <span className="absolute right-0.5 bottom-[3px] border-b-[5px] border-l-[5px] border-b-[#7882a0] border-l-transparent" />}
        </button>
      ))}
      <div className="grow border-l border-[#d0daea]" />
      <div className="w-[86px] shrink-0 divide-y divide-[#d0daea] border-l border-[#d0daea] text-[12px] text-[#444]">
        <div className="flex h-[19px] items-center justify-between px-2">
          <svg viewBox="0 0 16 15" className="h-[14px] w-4"><path d="M1 2h14v12H1z" fill="#f4f4f4" stroke="#777" /><path d="M1 2h14v3H1zM4 0v3M8 0v3M12 0v3" fill="#888" stroke="#666" /><path d="M3 8h10M3 11h10" stroke="#888" strokeDasharray="2 1" /></svg>
          22/08/30
        </div>
        <div className="flex h-[19px] items-center justify-between px-2">
          <Clock size={15} className="fill-[#f4f4f4] text-[#777]" />16:43:36
        </div>
      </div>
    </div>
  );
}

const box = 'h-5 border border-[#969696] bg-[#f0f0f0] text-center leading-[18px]';

function ChartControls() {
  return (
    <div className="flex h-[25px] shrink-0 items-end text-[13px] text-black">
      <button aria-label="패널" className={`${box} mr-0.5 flex w-[19px] items-center justify-center`}><PanelLeft size={13} /></button>
      <span className="relative mr-0.5 flex">
        <select aria-label="종류" className={`${box} w-[31px] appearance-none pl-1 text-left`}><option>주</option></select>
        <span className="pointer-events-none absolute top-0 right-0 h-5 w-3.5 border border-[#969696] text-center text-[8px] leading-[18px] text-[#555]">▼</span>
      </span>
      <button className={`${box} mr-0.5 w-5`}>전</button>
      <input aria-label="종목코드" defaultValue="025770" className="h-5 w-[54px] border border-[#969696] bg-white pl-0.5 text-[12px]" />
      <button aria-label="종목 목록" className={`${box} mr-px w-3.5 text-[8px] text-[#555]`}>▼</button>
      <button aria-label="종목 찾기" className={`${box} mr-0.5 flex w-[18px] items-center justify-center`}><Search size={13} className="text-[#666]" /></button>
      <button aria-label="소리" className={`${box} flex w-[18px] items-center justify-center`}><Volume1 size={13} className="fill-[#555] text-[#555]" /></button>
      <button aria-label="소리 설정" className={`${box} mr-0.5 w-2.5 text-[7px] text-[#555]`}>▼</button>
      <div className="mr-0.5 flex h-5 w-20 items-center border border-[#969696] bg-white whitespace-nowrap text-[#8c0050]">
        <span className="mr-0.5 h-full bg-[#8ca03c] px-0.5 leading-[18px] text-white">신</span>한국정보통
      </div>
      <div className="mr-0.5 flex">
        {['일', '주', '월', '년'].map((t) => <button key={t} className={`${box} w-[19px]`}>{t}</button>)}
      </div>
      <div className="mr-0.5 flex">
        {['분', '초', '틱'].map((t) => <button key={t} className={`h-5 w-[19px] border border-[#969696] text-center leading-[18px] ${t === '초' ? 'bg-[#4b82c3] text-white' : 'bg-[#f0f0f0]'}`}>{t}</button>)}
      </div>
      <div className="mr-0.5 flex text-[12px]">
        {['1', '3', '5', '10', '15', '30', '45', '60'].map((t) => <button key={t} className={`h-5 w-[19px] border border-[#969696] text-center leading-[18px] ${t === '5' ? 'bg-[#4b82c3] text-white' : 'bg-[#f0f0f0]'}`}>{t}</button>)}
      </div>
      <span className="relative mr-0.5 flex text-[12px]">
        <select aria-label="주기" className="h-5 w-[38px] appearance-none border border-[#969696] bg-white pl-2"><option>5</option></select>
        <span className="pointer-events-none absolute top-0 right-0 h-5 w-3.5 border border-[#969696] bg-[#f0f0f0] text-center text-[8px] leading-[18px] text-[#555]">▼</span>
      </span>
      <input aria-label="표시 개수" defaultValue="1688" className="h-5 w-[30px] border border-[#969696] bg-white pl-px text-[12px]" />
      <span className="mr-1 w-8 pl-px text-[12px] leading-5 text-[#444]">/2519</span>
      <div className="mr-0.5 flex text-[#555]">
        <button aria-label="종목 추가" className={`${box} w-[19px]`}><svg viewBox="0 0 16 16" className="h-4 w-4"><path d="M2 3h4v6H2zM4 1v10M8 3h3v6H8zM9.5 1v10" fill="#555" stroke="#777" /><path d="M12 9v6M9 12h6" stroke="#333" strokeWidth="2" /></svg></button>
        <button aria-label="지표 추가" className={`${box} w-[19px]`}><svg viewBox="0 0 16 16" className="h-4 w-4" fill="none"><path d="M1 7l4-4 6 5 4-5M1 4l3 4 4-4 3 4" stroke="#777" /><path d="M11 9v6M8 12h6" stroke="#333" strokeWidth="2" /></svg></button>
        <button aria-label="저장" className={`${box} flex w-[19px] items-center justify-center`}><Save size={15} /></button>
        <button aria-label="설정" className={`${box} flex w-[20px] items-center justify-center`}><Settings size={13} strokeWidth={3} /></button>
      </div>
      <label className="flex h-5 items-center gap-1 text-[12px]">
        <input type="checkbox" className="h-[13px] w-[13px] appearance-none border border-[#888] bg-white" />D
      </label>
    </div>
  );
}

function Quote() {
  return (
    <div className="flex h-5 shrink-0 gap-0.5 text-[12px] leading-[18px] text-[#e61e0f]">
      <div className="flex w-[750px] divide-x divide-[#aaa] border border-[#828282] bg-[#f0f0f0] whitespace-nowrap">
        <div className="flex w-[172px] justify-end pr-px"><span className="mr-1">10,350</span><span className="mr-3.5">▲</span><span className="mr-1">1,800</span><span>+21.05%</span></div>
        <div className="flex w-[171px] justify-end gap-[3px] pr-px"><span className="text-black">5,649,188</span><span>3,395.35%</span><span className="text-black">15.09%</span></div>
        <div className="w-[82px] pr-px text-right text-black">57,266백만</div>
        <div className="flex w-[140px] justify-between pr-1 pl-0.5"><span className="text-[13px] text-black">최우선</span><span>10,350</span><span>10,300</span></div>
        <div className="flex grow justify-between pr-2 pl-0.5">
          <span className="text-black">시</span><span>8,700</span><span className="text-black">고</span><span>11,000</span><span className="text-black">저</span><span>8,650</span>
        </div>
      </div>
      <button className="w-10 border border-[#888] bg-[#f5d0cb] text-[13px] text-black">매수</button>
      <button className="w-10 border border-[#888] bg-[#c8dcf2] text-[13px] text-black">매도</button>
    </div>
  );
}

const zig = 'M1 17l4-5 3 3 4-9 3 10 3-7 3-2';
const sideTools: { label: string; draw: React.ReactNode }[] = [
  { label: '전환', draw: <><path d="M5 6h8v5H8v6h8" fill="none" stroke="#1e326e" strokeWidth="3" /><path d="M6 1v10L1 6zM15 12v10l5-5z" fill="#1e326e" /></> },
  { label: '연결', draw: <><path d="M2 2h6M2 2v16M2 10h5M2 18h6M14 2h5v7h-5M14 13h5v6h-5" fill="none" stroke="#999" strokeWidth="2" /><path d="M8 6h5M10 16h6" fill="none" stroke="#1e326e" strokeWidth="2" /><path d="M12 2v8l4-4zM11 12v8l-4-4z" fill="#1e326e" /></> },
  { label: '설정', draw: <><circle cx="11" cy="11" r="7" fill="#f0b43c" stroke="#82500a" strokeDasharray="3 2" strokeWidth="3" /><circle cx="11" cy="11" r="6" fill="#f5c350" /><circle cx="11" cy="11" r="3" fill="#eee" stroke="#82500a" /></> },
  { label: '함수', draw: <><path d="M2 2h17v11H2z" fill="#fff" stroke="#999" /><path d="M3 8l4-3 4 3 4-4 3 2" fill="none" stroke="#e68c8c" /><text x="7" y="19" fontSize="9" fontWeight="bold" fill="#1e326e">f(x)</text></> },
  { label: '지표', draw: <><path d="M3 2v15h16" fill="none" stroke="#777" /><path d="M4 13l4-5 4 3 5-7" fill="none" stroke="#dc3c3c" strokeWidth="2" /><path d="M12 13h7v7h-7zM15.500 13v7M12 16.500h7" fill="#fff" stroke="#1e326e" /></> },
  { label: '선택', draw: <><path d={zig} fill="none" stroke="#bbb" /><path d="M7 2l9 9-4 1 3 6-2 1-3-6-3 3z" fill="#1e326e" /></> },
  { label: '수평선', draw: <><path d={zig} fill="none" stroke="#bbb" /><path d="M2 10h18" stroke="#1e326e" strokeWidth="1.500" /><path d="M1 9h2v3H1zM19 9h2v3h-2z" fill="#dc3c3c" /></> },
  { label: '추세선', draw: <><path d={zig} fill="none" stroke="#bbb" /><path d="M2 15L20 6" stroke="#1e326e" strokeWidth="1.500" /><path d="M1 14h2v3H1zM19 5h2v3h-2z" fill="#dc3c3c" /></> },
  { label: '자동 추세선', draw: <><path d="M2 11L20 3" stroke="#888" strokeWidth="1.500" /><path d="M19 2h2v3h-2z" fill="#dc3c3c" /><text x="2" y="20" fontSize="7" fontWeight="bold" fill="#1e326e">AUTO</text></> },
  { label: '지그재그', draw: <><path d="M13 14l4-8 3 8" fill="none" stroke="#bbb" /><path d="M3 14l4-3 3 3 2-9 3 4 1 7 4-2" fill="none" stroke="#1e326e" /><path d="M2 13h2v2H2zM6 10h2v2H6zM11 4h2v2h-2zM15 15h2v2h-2zM19 13h2v2h-2z" fill="#dc3c3c" /></> },
  { label: '캔들', draw: <path d="M4 4v14M2 8h4v6H2zM18 4v14M16 8h4v6h-4z" fill="#4664b4" stroke="#1e326e" /> },
  { label: '되돌리기', draw: <><path d={zig} fill="none" stroke="#bbb" /><path d="M5 10V5h12v5" fill="none" stroke="#1e4696" strokeWidth="3" /><path d="M1 8h8l-4 5zM13 8h8l-4 5z" fill="#1e4696" /></> },
  { label: '글자', draw: <><path d={zig} fill="none" stroke="#bbb" /><text x="3" y="12" fontSize="12" fontWeight="bold" fill="#1e4696">T</text></> },
  { label: '번호', draw: <><path d="M4 17V10h7" fill="none" stroke="#1e326e" strokeWidth="1.500" /><path d="M3 16h3v3H3z" fill="#dc3c3c" /><path d="M11 3h8v11h-8z" fill="#fff" stroke="#1e326e" /><text x="12" y="12" fontSize="10" fontWeight="bold" fill="#1e326e">1</text></> },
  { label: '지우기', draw: <><path d={zig} fill="none" stroke="#bbb" /><path d="M8 10l6-6 5 4-6 7-5-1z" fill="#fff8e6" stroke="#333" /></> },
  { label: '모두 지우기', draw: <><path d="M9 9l6-6 4 4-6 6-4-1z" fill="#fff8e6" stroke="#333" /><text x="2" y="20" fontSize="7" fontWeight="bold" fill="#1e326e">ALL</text></> },
  { label: '표', draw: <><path d="M2 3h17v15H2zM2 7h17M2 11h17M8 3v15" fill="#fff" stroke="#999" /><text x="11" y="17" fontSize="11" fontWeight="bold" fill="#1e4696">T</text></> },
  { label: '고저', draw: <><path d="M2 5h13" stroke="#c81e1e" strokeWidth="1.500" /><path d="M2 11h13" stroke="#000" strokeWidth="1.500" /><path d="M2 17h13" stroke="#1e64c8" strokeWidth="1.500" /><text x="16" y="7" fontSize="6">H</text><text x="16" y="13" fontSize="6">C</text><text x="16" y="20" fontSize="6">L</text></> },
  { label: '파동', draw: <><path d="M2 16l4-5 3 3 3-9 3 10 4-9" fill="none" stroke="#5a6eaa" /><path d="M1 15h2v2H1zM5 10h2v2H5zM8 13h2v2H8zM11 4h2v2h-2zM14 14h2v2h-2zM18 5h2v2h-2z" fill="#dc3c3c" /></> },
  { label: '부채꼴', draw: <><text x="2" y="9" fontSize="9" fill="#1e326e">G·F</text><path d="M6 19L20 6M6 19l14-8M6 19l14-3M6 19L14 7" stroke="#1e326e" /></> },
];

function SideBar() {
  return (
    <aside className="w-[31px] shrink-0 bg-[#f4f6f8]">
      <div className="flex h-[609px] flex-col items-center gap-1.5 border-b border-[#999] bg-[#ececec] pt-2.5">
        {sideTools.map((t) => (
          <button key={t.label} aria-label={t.label} className="h-6 w-6 shrink-0 border border-[#b4b4b4] border-r-[#8c8c8c] border-b-[#8c8c8c] bg-[#e4e4e0]">
            <svg viewBox="0 0 22 22" className="h-full w-full">
              {t.draw}
              {t.label === '캔들' && <path d="M11 2v18M9 6h4v9H9z" fill="#fff" stroke="#dc1e1e" strokeWidth="1.500" />}
            </svg>
          </button>
        ))}
      </div>
    </aside>
  );
}

function ScrollRow() {
  const btn = 'flex w-[17px] items-center justify-center border border-white border-r-[#777] border-b-[#777] bg-[#e8e8e8]';
  const tools = [
    'M2 2h9v9H2zM7 7h7v7H7zM10 7v7M7 10h7', 'M1 2h9v8H1zM6 6h9v8H6z', 'M1 2h14M1 14h14M1 10l4-3 4 3 6-5', 'M2 5h12M5 2v12M6 7l6 6M6 11V7h4',
    'M1 3h14M2 12l3-6 4 5 4-4', 'M3 2v12M1 13l5-7 4 5 4-3', 'M1 13L9 2M4 14l4-6 5 4',
  ];
  return (
    <div className="flex h-[17px] shrink-0 bg-[#f0f0f0]">
      <button aria-label="왼쪽" className={btn}><svg viewBox="0 0 8 8" className="h-2 w-2"><path d="M6 0v8L2 4z" /></svg></button>
      <div className="flex grow bg-[#f6f6f6] bg-[radial-gradient(#e4e4e4_1px,transparent_1px)] bg-[length:3px_3px]">
        <div className="grow-[101] basis-0" />
        <div className="grow-[998] basis-0 border-2 border-white border-r-[#777] border-b-[#777] bg-[#f0f0f0]" />
        <div className="grow-[392] basis-0" />
      </div>
      {['M2 0v8l4-4z', 'M4 0v8L0 4zM8 0v8L4 4z', 'M1 1h6v6H1z', 'M0 0v8l4-4zM4 0v8l4-4z'].map((d) => (
        <button key={d} aria-label="재생" className={btn}><svg viewBox="0 0 8 8" className="h-[9px] w-[9px]"><path d={d} /></svg></button>
      ))}
      <div className="mx-1 w-[70px] pt-[3px]">
        <input aria-label="속도" type="range" defaultValue={70} className="block h-1 w-full appearance-none border border-[#aaa] bg-white accent-gray-500 [&::-webkit-slider-thumb]:h-[10px] [&::-webkit-slider-thumb]:w-1 [&::-webkit-slider-thumb]:appearance-none [&::-webkit-slider-thumb]:border [&::-webkit-slider-thumb]:border-[#777] [&::-webkit-slider-thumb]:bg-white" />
        <svg viewBox="0 0 70 4" className="mt-1.5 h-1 w-full" stroke="#333"><path d="M2.500 0v4M9 0v4M15.500 0v4M22 0v4M28.500 0v4M35 0v4M41.500 0v4M48 0v4M54.500 0v4M61 0v4M67.500 0v4" /></svg>
      </div>
      <div className="flex w-[223px] items-center justify-between px-0.5 text-[#666]">
        {tools.map((d) => (
          <button key={d} aria-label="도구"><svg viewBox="0 0 16 16" className="h-[14px] w-[14px]" fill="none" stroke="#555"><path d={d} /></svg></button>
        ))}
        <button aria-label="모두 지우기"><Eraser size={13} /></button>
        <button aria-label="차트 복사"><svg viewBox="0 0 16 16" className="h-[14px] w-[14px]" fill="none" stroke="#555"><path d="M4 2h10v8H4zM1 6h10v8H1zM2 12l3-3 4 2" /></svg></button>
        <button aria-label="확대경"><Search size={13} /></button>
        <button aria-label="축소"><svg viewBox="0 0 10 10" className="h-2.5 w-2.5" stroke="#444" strokeWidth="2"><path d="M0 5h10" /></svg></button>
        <button aria-label="확대"><svg viewBox="0 0 10 10" className="h-2.5 w-2.5" stroke="#444" strokeWidth="2"><path d="M0 5h10M5 0v10" /></svg></button>
        <button className="text-[13px] font-bold text-[#444]">A</button>
      </div>
    </div>
  );
}

function TabBar() {
  return (
    <nav className="flex h-[26px] shrink-0 bg-gradient-to-b from-[#d6d6d6] to-[#e4e4e4] text-[13px] text-[#333]">
      <div className="flex w-3 shrink-0 flex-col items-center text-[9px] leading-[10px] text-[#777]">
        ×<span className="h-3.5 w-[5px] border-x border-white outline-1 outline-[#aaa]" />
      </div>
      {tabs.map((t, i) => (
        <button key={i} className={`flex w-[102px] shrink-0 items-center gap-1.5 overflow-hidden border-l border-[#f4f4f4] pl-1 whitespace-nowrap ${i === tabs.length - 1 ? 'bg-[#bebebe]' : ''}`}>
          <span className="h-[15px] w-[13px] shrink-0 rounded-[2px] bg-[#5f7db9] text-center text-[11px] leading-[15px] text-white">1</span>
          <span className="w-[75px] overflow-hidden text-left">{t}</span>
        </button>
      ))}
      <button aria-label="내려받기" className="flex grow items-center justify-center">
        <svg viewBox="0 0 12 16" className="h-4 w-3" fill="#555"><path d="M4 0h4v5h3L6 11 1 5h3zM2 13h8v2H2z" /></svg>
      </button>
      <button aria-label="배경" className="flex w-[26px] items-center justify-center border-l border-[#f4f4f4]">
        <svg viewBox="0 0 16 16" className="h-4 w-4"><path d="M1 1h14v14H1z" fill="#fff" stroke="#555" /><path d="M2 12l4-5 3 3 3-5 2 3v6H2z" fill="#28a0a0" /></svg>
      </button>
    </nav>
  );
}

export default function App() {
  return (
    <div className={`flex h-screen flex-col overflow-hidden border-b-2 border-[#5f6450] bg-[#3a5791] ${FONT}`}>
      <TitleBar />
      <main className="mr-[3px] mb-[3px] ml-[3px] flex min-h-0 flex-1 flex-col bg-[#ececec]">
        <MenuBar />
        <ToolBar />
        <div className="flex min-h-0 flex-1">
          <div className="flex min-w-0 flex-1 flex-col bg-[#d0d0d0] px-[3px]">
            <ChartControls />
            <div className="h-[3px] shrink-0" />
            <Quote />
            <div className="h-[3px] shrink-0" />
            <Chart />
            <ScrollRow />
          </div>
          <SideBar />
        </div>
        <div className="h-1 shrink-0" />
        <TabBar />
      </main>
    </div>
  );
}
